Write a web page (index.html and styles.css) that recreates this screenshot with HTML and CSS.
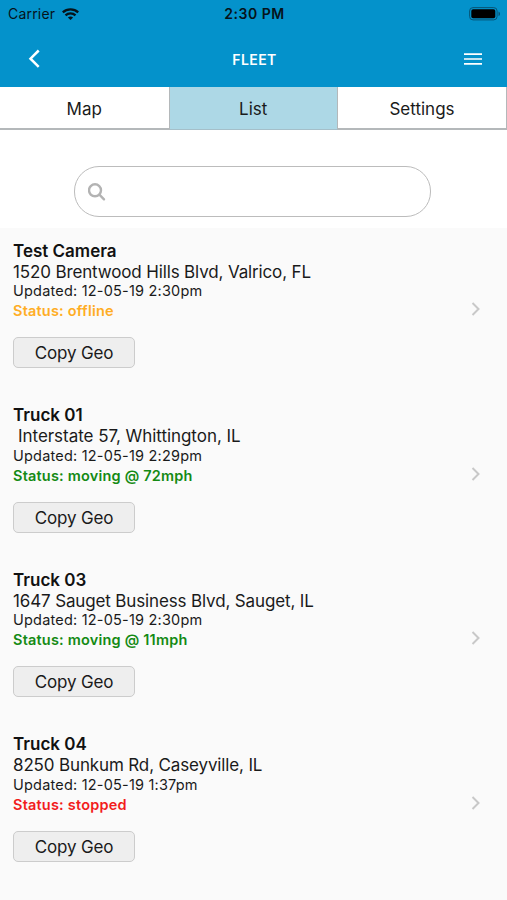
FILE: index.html
```html
<!DOCTYPE html>
<html lang="en">
<head>
<meta charset="utf-8">
<title>Fleet</title>
<link rel="stylesheet" href="styles.css">
</head>
<body>
<header class="header">
  <div class="statusbar">
    <div class="carrier"><span class="carrier-name">Carrier</span>
      <svg width="17" height="12" viewBox="0 0 17 12" fill="none" stroke="#06131a" stroke-width="2.300"><path d="M.8 4.400c4.300-4 11.100-4 15.400 0M3.500 7.300c2.800-2.600 7.200-2.600 10 0"/><path d="M8.500 12 5.900 9.400c1.500-1.300 3.700-1.300 5.200 0z" fill="#06131a" stroke="none"/></svg>
    </div>
    <span class="clock">2:30 PM</span>
    <svg class="battery" width="32" height="14" viewBox="0 0 32 14"><rect x=".6" y=".6" width="27.500" height="12.300" rx="3.400" fill="none" stroke="#075476"/><rect x="2.300" y="2.300" width="24" height="9" rx="1.800"/><path d="M29.500 4.500c2 .8 2 3.800 0 4.600z" fill="#075476"/></svg>
  </div>
  <nav class="navbar">
    <svg width="14" height="20" viewBox="0 0 14 20" fill="none" stroke="#fff" stroke-width="2.500"><path d="M11.700 1.500 3.500 9.700l8.200 8.200"/></svg>
    <h1 class="title">FLEET</h1>
    <svg width="18" height="13" viewBox="0 0 18 13" stroke="#fff" stroke-width="1.700"><path d="M0 2.200h18M0 7h18M0 11.800h18"/></svg>
  </nav>
</header>
<div class="tabs"><div class="tab">Map</div><div class="tab active">List</div><div class="tab">Settings</div></div>
<div class="search-area"><div class="search">
  <svg width="18" height="18" viewBox="0 0 18 18" fill="none" stroke="#b3b3b3" stroke-width="2.400"><circle cx="7" cy="7.300" r="6"/><path d="m11.400 11.700 4.600 4.600" stroke-linecap="round"/></svg>
</div></div>
<main class="list">
  <section class="item"><div class="info"><h2 class="name">Test Camera</h2><p class="address">1520 Brentwood Hills Blvd, Valrico, FL</p><p class="updated">Updated: 12-05-19 2:30pm</p><p class="status offline">Status: offline</p><button class="copy">Copy Geo</button></div><svg class="chevron" width="10" height="14" viewBox="0 0 10 14"><path d="m1.500 1 6 6-6 6"/></svg></section>
  <section class="item"><div class="info"><h2 class="name">Truck 01</h2><p class="address indented">Interstate 57, Whittington, IL</p><p class="updated">Updated: 12-05-19 2:29pm</p><p class="status moving">Status: moving @ 72mph</p><button class="copy">Copy Geo</button></div><svg class="chevron" width="10" height="14" viewBox="0 0 10 14"><path d="m1.500 1 6 6-6 6"/></svg></section>
  <section class="item"><div class="info"><h2 class="name">Truck 03</h2><p class="address">1647 Sauget Business Blvd, Sauget, IL</p><p class="updated">Updated: 12-05-19 2:30pm</p><p class="status moving">Status: moving @ 11mph</p><button class="copy">Copy Geo</button></div><svg class="chevron" width="10" height="14" viewBox="0 0 10 14"><path d="m1.500 1 6 6-6 6"/></svg></section>
  <section class="item"><div class="info"><h2 class="name">Truck 04</h2><p class="address">8250 Bunkum Rd, Caseyville, IL</p><p class="updated">Updated: 12-05-19 1:37pm</p><p class="status stopped">Status: stopped</p><button class="copy">Copy Geo</button></div><svg class="chevron" width="10" height="14" viewBox="0 0 10 14"><path d="m1.500 1 6 6-6 6"/></svg></section>
</main>
</body>
</html>
```
FILE: styles.css
```css
* { box-sizing: border-box; }
body { margin: 0; background: #fff; color: #1a1a1a; font-family: Inter, "Liberation Sans", sans-serif; }
h1, h2, p { margin: 0; }
svg { display: block; flex: none; }
.header { height: 87px; background: #0492cb; }
.statusbar { height: 27px; display: grid; grid-template-columns: 1fr auto 1fr; align-items: center; padding: 0 6px 0 8px; color: #06131a; }
.carrier { display: flex; align-items: center; gap: 7px; font-size: 14px; letter-spacing: .2px; }
.clock { font-size: 14px; font-weight: 600; letter-spacing: .5px; }
.battery { justify-self: end; }
.navbar { height: 62px; display: grid; grid-template-columns: 1fr auto 1fr; align-items: center; padding: 2px 25px 0 27px; }
.navbar svg:last-child { justify-self: end; margin-top: -1px; }
.title { color: #fff; font-size: 14px; font-weight: 600; letter-spacing: .4px; }
.tabs { display: grid; grid-template-columns: 169.5px 168.5px 169px; height: 43px; }
.tab { border: solid #b4b8ba; border-width: 0 1px 2px 0; display: flex; align-items: center; justify-content: center; font-size: 17px; padding-top: 2px; }
.active { background: #add8e6; border-bottom: 1px solid #a5bfc9; padding-bottom: 1px; }
.search-area { height: 98px; padding: 36px 76px 0 74px; }
.search { height: 51px; border: 1px solid #bcbcbc; border-radius: 25px; display: flex; align-items: center; padding-left: 13px; }
.list { background: #fafafa; height: 672px; padding-top: 12.9px; }
.item { height: 164.5px; display: flex; justify-content: space-between; padding: 0 26px 0 13px; }
.name { color: #111; font-size: 17px; line-height: 21px; font-weight: 600; }
.address { font-size: 17px; line-height: 21px; letter-spacing: -.14px; }
.indented { padding-left: 5px; letter-spacing: -.04px; }
.updated { font-size: 14.5px; line-height: 18px; letter-spacing: .2px; margin: -.7px 0 1px; }
.status { font-size: 14.5px; line-height: 20px; font-weight: 600; letter-spacing: .2px; }
.offline { color: #ffad24; }
.moving { color: #148a14; }
.stopped { color: #f21c1c; }
.copy { display: block; width: 122px; height: 31px; margin-top: 16px; padding: 1px 0 0; border: 1px solid #ccc; border-radius: 5px; background: #eee; color: #1a1a1a; font: 17px Inter, sans-serif; letter-spacing: -.15px; }
.chevron { margin-top: 61.5px; fill: none; stroke: #c8c8c8; stroke-width: 2; }
```
